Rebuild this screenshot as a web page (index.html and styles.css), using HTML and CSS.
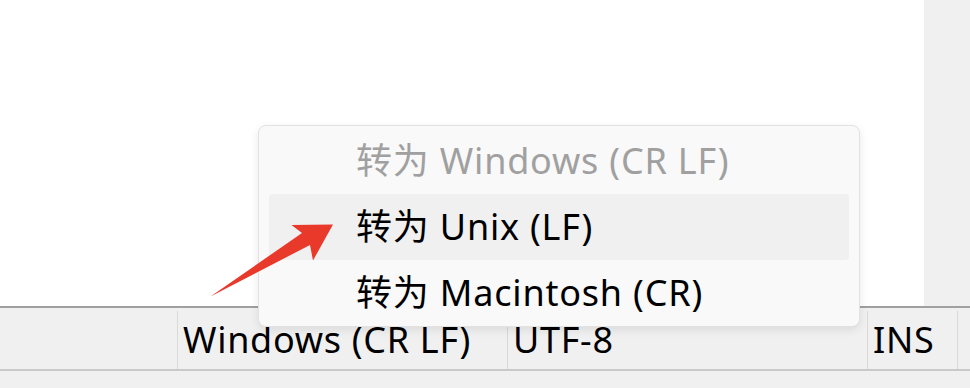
FILE: index.html
```html
<!DOCTYPE html>
<html lang="zh-CN">
<head>
    <meta charset="UTF-8">
    <meta name="viewport" content="width=device-width, initial-scale=1.0">
    <title>换行符</title>
    <link rel="stylesheet" href="styles.css">
</head>
<body>
    <div class="window">
        <div class="editor">
            <div class="text-area"></div>
            <div class="scrollbar"></div>
        </div>
        <div class="statusbar">
            <div class="cell cell-blank"></div>
            <div class="cell cell-eol">Windows (CR LF)</div>
            <div class="cell cell-enc">UTF-8</div>
            <div class="cell cell-mode">INS</div>
            <div class="cell cell-end"></div>
        </div>
        <div class="bottom-strip"></div>

        <div class="menu">
            <div class="menu-item disabled">转为 Windows (CR LF)</div>
            <div class="menu-item active">转为 Unix (LF)</div>
            <div class="menu-item">转为 Macintosh (CR)</div>
        </div>

        <svg class="arrow" width="970" height="388" viewBox="0 0 970 388">
            <polygon points="210.5,296.5 302,233 291.5,225 333,224.5 313,260.5 310,245" fill="#e8392b"/>
        </svg>
    </div>
</body>
</html>
```

FILE: styles.css
```css
body, html {
    margin: 0;
    padding: 0;
    width: 970px;
    height: 388px;
    overflow: hidden;
    background-color: #f0f0f0;
    font-family: "Noto Sans", "Noto Sans CJK SC", sans-serif;
}

.window {
    position: relative;
    width: 970px;
    height: 388px;
}

.editor {
    display: flex;
    height: 306px;
}

.text-area {
    flex: 1;
    background-color: white;
}

.scrollbar {
    width: 46px;
    background-color: #f0f0f0;
}

.statusbar {
    display: flex;
    height: 61px;
    border-top: 2px solid #a0a0a0;
    border-bottom: 2px solid #c9c9c9;
    background-color: #f0f0f0;
}

.cell {
    box-sizing: border-box;
    height: 58px;
    margin-top: 3px;
    border-right: 1px solid #d9d9d9;
    font-size: 36px;
    letter-spacing: 0.7px;
    line-height: 58px;
    color: #000;
    padding-left: 5px;
    white-space: nowrap;
}

.cell-blank {
    width: 178px;
}

.cell-eol {
    width: 330px;
}

.cell-enc {
    width: 360px;
}

.cell-mode {
    width: 90px;
}

.cell-end {
    flex: 1;
    border-right: none;
}

.bottom-strip {
    height: 17px;
    background-color: #f0f0f0;
}

.menu {
    position: absolute;
    left: 258px;
    top: 125px;
    width: 602px;
    box-sizing: border-box;
    padding: 2px 10px 0;
    background-color: #f9f9f9;
    border: 1px solid #e2e2e2;
    border-radius: 8px;
    box-shadow: 0 3px 10px rgba(0, 0, 0, 0.09);
}

.menu-item {
    height: 66px;
    line-height: 66px;
    padding-left: 87px;
    font-size: 36px;
    letter-spacing: 0.8px;
    color: #000;
    border-radius: 4px;
    white-space: nowrap;
}

.menu-item.disabled {
    color: #a0a0a0;
}

.menu-item.active {
    background-color: #f0f0f0;
}

.arrow {
    position: absolute;
    left: 0;
    top: 0;
    pointer-events: none;
}
```
